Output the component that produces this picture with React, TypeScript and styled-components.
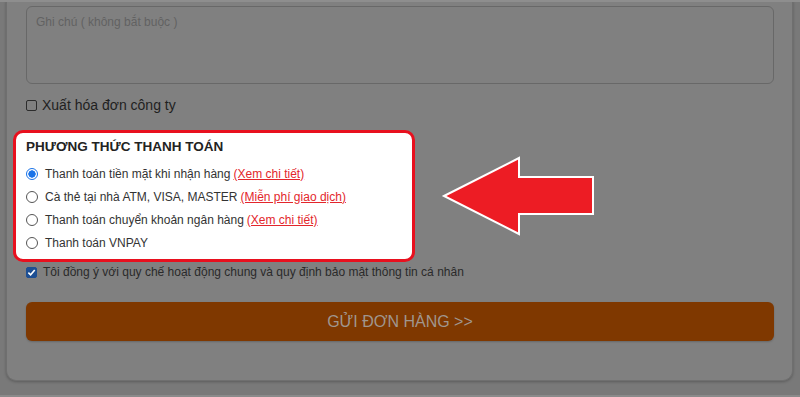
import React from 'react'
import styled, { createGlobalStyle, css } from 'styled-components'

const colors = {
	PAGE: '#797979',
	CARD: '#808080',
	CARD_BORDER: '#6f6f6f',
	FIELD_BORDER: '#686868',
	PLACEHOLDER: '#626262',
	TEXT_DIM: '#1f1f1f',
	TEXT: '#333333',
	RED: '#e3262c',
	FRAME: '#e8101e',
	BLUE: '#1a73e8',
	BUTTON: '#7f3800',
	BUTTON_TEXT: '#a0968e',
	ARROW: '#ed1c24',
}

const GlobalStyle = createGlobalStyle`
	html, body {
		margin: 0;
		padding: 0;
		background: ${colors.PAGE};
		font-family: 'Liberation Sans', Arial, sans-serif;
	}
	* {
		box-sizing: border-box;
	}
`

const methods = [
	{ label: 'Thanh toán tiền mặt khi nhận hàng', link: '(Xem chi tiết)', checked: true },
	{ label: 'Cà thẻ tại nhà ATM, VISA, MASTER', link: '(Miễn phí giao dịch)' },
	{ label: 'Thanh toán chuyển khoản ngân hàng', link: '(Xem chi tiết)' },
	{ label: 'Thanh toán VNPAY' },
]

export default function App() {
	return (
		<Page>
			<GlobalStyle />
			<TopEdge />
			<Card>
				<Note placeholder="Ghi chú ( không bắt buộc )" />
				<CheckRow>
					<Box />
					<InvoiceLabel>Xuất hóa đơn công ty</InvoiceLabel>
				</CheckRow>
				<HighlightRow>
					<Frame>
						<Title>PHƯƠNG THỨC THANH TOÁN</Title>
						{methods.map((m) => (
							<RadioRow key={m.label}>
								<Radio checked={!!m.checked} />
								<RadioLabel>
									{m.label}
									{m.link && <Link>{m.link}</Link>}
								</RadioLabel>
							</RadioRow>
						))}
					</Frame>
					<Arrow width="160" height="84" viewBox="0 0 160 84">
						<polygon
							points="4,41 79,3 79,22 153,22 153,59 79,59 79,79"
							fill={colors.ARROW}
							stroke="#ffffff"
							strokeWidth="2"
						/>
					</Arrow>
				</HighlightRow>
				<AgreeRow>
					<Box checked>
						<svg width="9" height="9" viewBox="0 0 10 10">
							<path d="M1.5 5.2 L4 7.6 L8.6 2.2" fill="none" stroke="#ffffff" strokeWidth="1.8" />
						</svg>
					</Box>
					<AgreeLabel>
						Tôi đồng ý với quy chế hoạt động chung và quy định bảo mật thông tin cá nhân
					</AgreeLabel>
				</AgreeRow>
				<Submit>GỬI ĐƠN HÀNG &gt;&gt;</Submit>
			</Card>
		</Page>
	)
}

const Page = styled.div`
	width: 800px;
	height: 397px;
	padding: 0 7px 0 6px;
	overflow: hidden;
	position: relative;
	border-bottom: 2px solid #8a8a8a;
`

const TopEdge = styled.div`
	position: absolute;
	top: 0;
	left: 0;
	right: 0;
	height: 2px;
	background: #8e8e8e;
`

const Card = styled.div`
	background: ${colors.CARD};
	border: 1px solid ${colors.CARD_BORDER};
	border-top: none;
	border-radius: 0 0 10px 10px;
	box-shadow: 0 1px 3px rgba(0, 0, 0, 0.25);
	padding: 6px 19px 38px 19px;
	display: flex;
	flex-direction: column;
	height: 381px;
`

const Note = styled.textarea`
	display: block;
	width: 748px;
	height: 78px;
	resize: none;
	background: transparent;
	border: 1px solid ${colors.FIELD_BORDER};
	border-radius: 6px;
	padding: 8px 9px;
	font-family: 'Liberation Sans', Arial, sans-serif;
	font-size: 12px;
	outline: none;

	&::placeholder {
		color: ${colors.PLACEHOLDER};
	}
`

const CheckRow = styled.div`
	display: flex;
	align-items: center;
	height: 16px;
	margin-top: 13px;
`

const Box = styled.span<{ checked?: boolean }>`
	width: 11px;
	height: 11px;
	border-radius: 2px;
	display: flex;
	align-items: center;
	justify-content: center;
	margin-right: 5px;
	${({ checked }) =>
		checked
			? css`
					background: #1d4f93;
					border: 1px solid #1d4f93;
			  `
			: css`
					border: 1px solid #2c2c2c;
			  `}
`

const InvoiceLabel = styled.span`
	font-size: 14px;
	color: ${colors.TEXT_DIM};
`

const HighlightRow = styled.div`
	display: flex;
	align-items: center;
	margin-top: 17px;
	margin-left: -13px;
`

const Frame = styled.div`
	width: 402px;
	height: 132px;
	background: #ffffff;
	border: 3px solid ${colors.FRAME};
	border-radius: 10px;
	padding: 5px 10px 0 10px;
`

const Title = styled.div`
	font-size: 13.5px;
	font-weight: bold;
	line-height: 18px;
	color: #222222;
	margin-bottom: 6px;
`

const RadioRow = styled.div`
	display: flex;
	align-items: center;
	height: 23px;
`

const Radio = styled.span<{ checked: boolean }>`
	width: 12px;
	height: 12px;
	border-radius: 50%;
	margin-right: 7px;
	flex: 0 0 12px;
	${({ checked }) =>
		checked
			? css`
					border: 1.5px solid ${colors.BLUE};
					background: radial-gradient(circle, ${colors.BLUE} 0 3.4px, #ffffff 3.9px);
			  `
			: css`
					border: 1px solid #555555;
			  `}
`

const RadioLabel = styled.span`
	font-size: 12px;
	color: ${colors.TEXT};
`

const Link = styled.span`
	color: ${colors.RED};
	text-decoration: underline;
	margin-left: 3px;
`

const Arrow = styled.svg`
	margin-left: 25px;
	margin-top: 1px;
	display: block;
`

const AgreeRow = styled.div`
	display: flex;
	align-items: center;
	height: 16px;
	margin-top: 2px;
`

const AgreeLabel = styled.span`
	font-size: 12px;
	color: #2a2a2a;
	margin-left: 1px;
`

const Submit = styled.div`
	margin-top: 22px;
	width: 748px;
	height: 39px;
	border-radius: 6px;
	background: ${colors.BUTTON};
	box-shadow: 0 1px 2px rgba(0, 0, 0, 0.2);
	color: ${colors.BUTTON_TEXT};
	font-size: 16px;
	display: flex;
	align-items: center;
	justify-content: center;
`
